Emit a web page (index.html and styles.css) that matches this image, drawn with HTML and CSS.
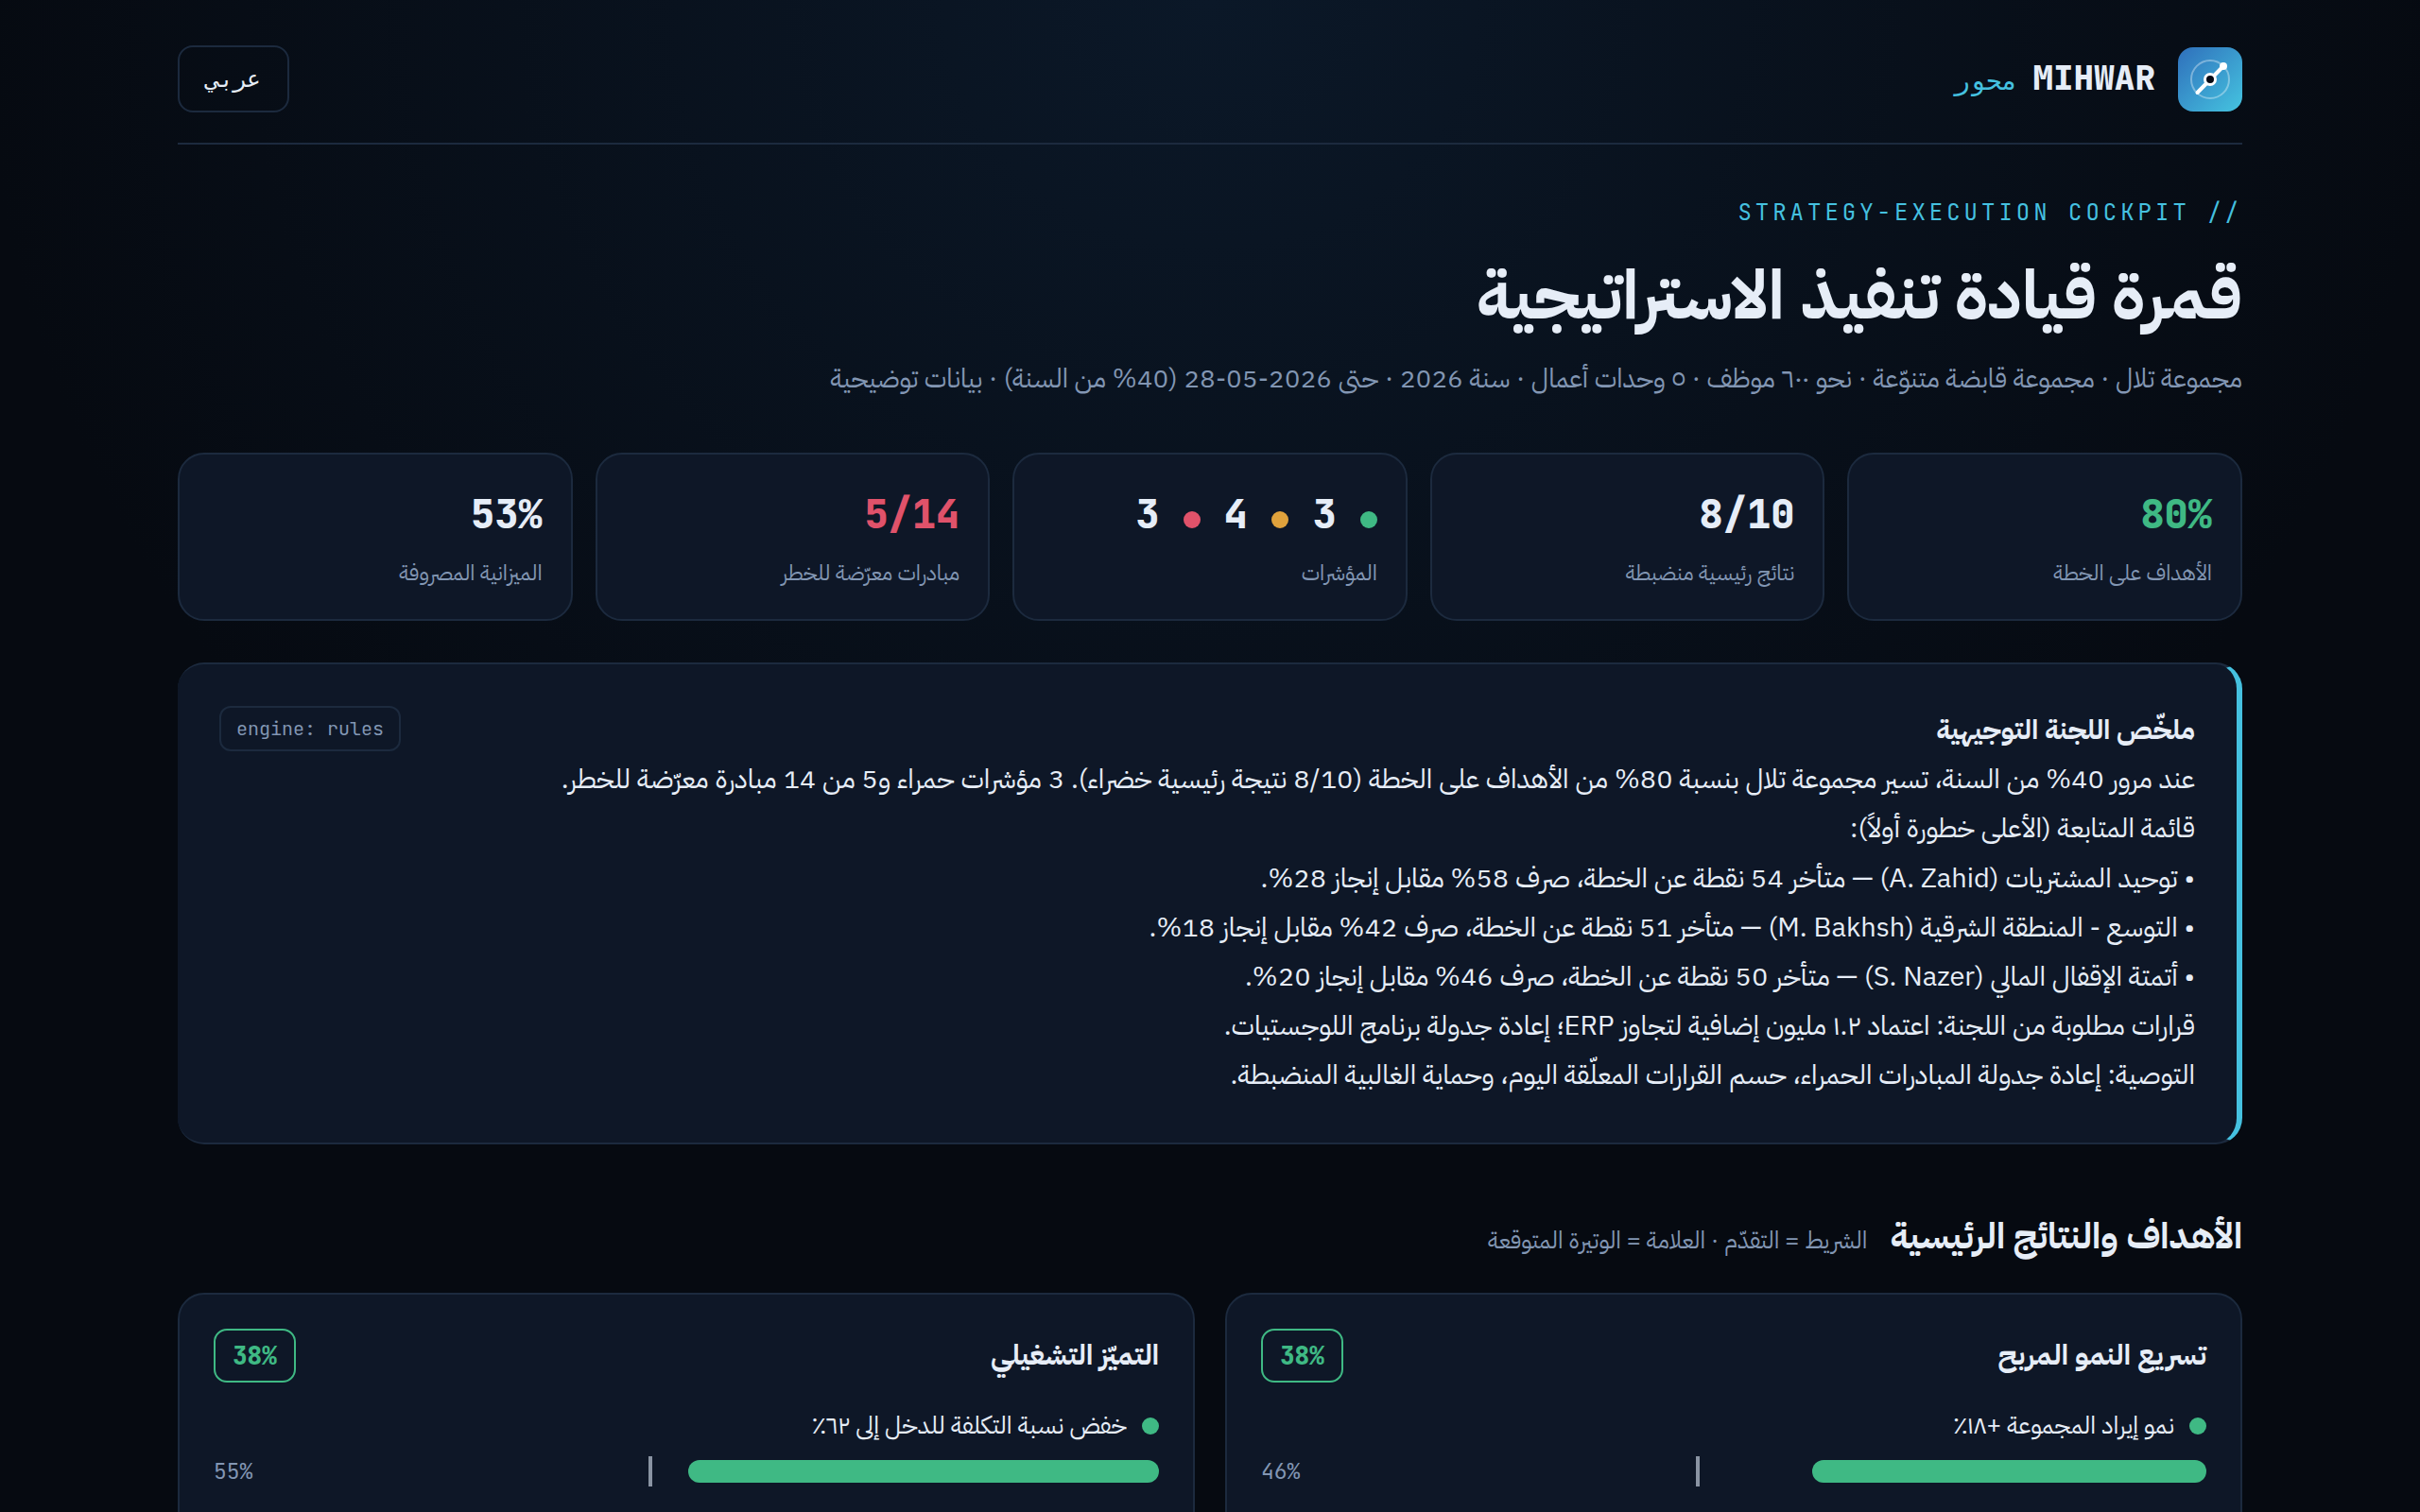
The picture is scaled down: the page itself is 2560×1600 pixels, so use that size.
FILE: index.html
```html
<!DOCTYPE html>
<html lang="ar" dir="rtl">
<head>
<meta charset="UTF-8" />
<meta name="viewport" content="width=device-width, initial-scale=1" />
<title>MIHWAR محور</title>
<link rel="stylesheet" href="styles.css">
</head>
<body>
<div class="wrap">

  <header class="topbar">
    <div class="brand">
      <svg class="logo" viewBox="0 0 68 68" aria-hidden="true">
        <defs>
          <linearGradient id="logoFill" x1="0" y1="0" x2="1" y2="1">
            <stop offset="0" stop-color="#2f6fbb" />
            <stop offset="1" stop-color="#45c4e0" />
          </linearGradient>
        </defs>
        <rect width="68" height="68" rx="16" fill="url(#logoFill)" />
        <circle cx="34" cy="34" r="20" fill="none" stroke="#fff" stroke-opacity=".35" stroke-width="2" />
        <path d="M20.500 48L48 20" stroke="#fff" stroke-width="4" stroke-linecap="round" />
        <circle cx="48" cy="20" r="4" fill="#fff" />
        <circle cx="34" cy="34" r="5.500" fill="#060a14" stroke="#fff" stroke-width="3" />
      </svg>
      <div class="name">MIHWAR <span class="name-ar">محور</span></div>
    </div>
    <button type="button" class="lang">عربي</button>
  </header>

  <main>
    <section class="hero">
      <p class="eyebrow">// STRATEGY-EXECUTION COCKPIT</p>
      <h1>قمرة قيادة تنفيذ الاستراتيجية</h1>
      <p class="sub">مجموعة تلال · مجموعة قابضة متنوّعة · نحو ٦٠٠ موظف · ٥ وحدات أعمال · سنة 2026 · حتى <bdi>28-05-2026</bdi> (40% من السنة) · بيانات توضيحية</p>
    </section>

    <section class="stats">
      <div class="stat">
        <div class="num green" dir="ltr">80%</div>
        <div class="label">الأهداف على الخطة</div>
      </div>
      <div class="stat">
        <div class="num" dir="ltr">8/10</div>
        <div class="label">نتائج رئيسية منضبطة</div>
      </div>
      <div class="stat">
        <div class="num"><i class="dot green"></i> 3 <i class="dot amber"></i> 4 <i class="dot red"></i> 3</div>
        <div class="label">المؤشرات</div>
      </div>
      <div class="stat">
        <div class="num red" dir="ltr">5/14</div>
        <div class="label">مبادرات معرّضة للخطر</div>
      </div>
      <div class="stat">
        <div class="num" dir="ltr">53%</div>
        <div class="label">الميزانية المصروفة</div>
      </div>
    </section>

    <section class="brief">
      <div class="brief-head">
        <h2>ملخّص اللجنة التوجيهية</h2>
        <span class="engine" dir="ltr">engine: rules</span>
      </div>
      <p>عند مرور 40% من السنة، تسير مجموعة تلال بنسبة 80% من الأهداف على الخطة (8/10 نتيجة رئيسية خضراء). 3 مؤشرات حمراء و5 من 14 مبادرة معرّضة للخطر.</p>
      <p>قائمة المتابعة (الأعلى خطورة أولاً):</p>
      <p>• توحيد المشتريات (A. Zahid) — متأخر 54 نقطة عن الخطة، صرف 58% مقابل إنجاز 28%.</p>
      <p>• التوسع - المنطقة الشرقية (M. Bakhsh) — متأخر 51 نقطة عن الخطة، صرف 42% مقابل إنجاز 18%.</p>
      <p>• أتمتة الإقفال المالي (S. Nazer) — متأخر 50 نقطة عن الخطة، صرف 46% مقابل إنجاز 20%.</p>
      <p>قرارات مطلوبة من اللجنة: اعتماد ١.٢ مليون إضافية لتجاوز ERP؛ إعادة جدولة برنامج اللوجستيات.</p>
      <p>التوصية: إعادة جدولة المبادرات الحمراء، حسم القرارات المعلّقة اليوم، وحماية الغالبية المنضبطة.</p>
    </section>

    <section class="okrs">
      <div class="section-head">
        <h2>الأهداف والنتائج الرئيسية</h2>
        <span>الشريط = التقدّم · العلامة = الوتيرة المتوقعة</span>
      </div>
      <div class="okr-grid">
        <article class="okr">
          <div class="okr-head">
            <h3>تسريع النمو المربح</h3>
            <span class="score" dir="ltr">38%</span>
          </div>
          <div class="kr">
            <div class="kr-name"><i class="dot green"></i>نمو إيراد المجموعة +١٨٪</div>
            <div class="kr-row">
              <div class="bar"><div class="fill" style="width:46%"></div><div class="pace" style="left:40.4%"></div></div>
              <span class="pct" dir="ltr">46%</span>
            </div>
          </div>
        </article>
        <article class="okr">
          <div class="okr-head">
            <h3>التميّز التشغيلي</h3>
            <span class="score" dir="ltr">38%</span>
          </div>
          <div class="kr">
            <div class="kr-name"><i class="dot green"></i>خفض نسبة التكلفة للدخل إلى ٦٢٪</div>
            <div class="kr-row">
              <div class="bar"><div class="fill" style="width:55%"></div><div class="pace" style="left:40.4%"></div></div>
              <span class="pct" dir="ltr">55%</span>
            </div>
          </div>
          <div class="kr">
            <div class="kr-name"><i class="dot green"></i>أتمتة الإقفال المالي</div>
            <div class="kr-row">
              <div class="bar"><div class="fill" style="width:20%"></div><div class="pace" style="left:40.4%"></div></div>
              <span class="pct" dir="ltr">20%</span>
            </div>
          </div>
        </article>
      </div>
    </section>
  </main>

</div>
</body>
</html>
```

FILE: styles.css
```css
:root {
  --bg: #060a11;
  --card: #0e1727;
  --line: #1c2a3e;
  --text: #e6edf7;
  --muted: #8296b3;
  --cyan: #45c1e0;
  --green: #3fb984;
  --amber: #e0a23c;
  --red: #e0526a;
  --sans: "IBM Plex Sans Arabic", "IBM Plex Sans", "DejaVu Sans", sans-serif;
  --mono: "JetBrains Mono", "DejaVu Sans Mono", monospace;
}

* {
  box-sizing: border-box;
  margin: 0;
  padding: 0;
}

html {
  background: var(--bg);
}

body {
  min-height: 100vh;
  overflow-x: hidden;
  background: radial-gradient(1300px 1200px at 50% 0, #0b1828, var(--bg)) no-repeat;
  color: var(--text);
  font-family: var(--sans);
  font-size: 29px;
  line-height: 52px;
}

.wrap {
  max-width: 2360px;
  margin: 0 auto;
  padding: 0 88px;
}

.topbar {
  display: flex;
  justify-content: space-between;
  align-items: center;
  padding: 48px 0 32px;
  border-bottom: 2px solid var(--line);
}

.brand {
  display: flex;
  align-items: center;
  gap: 24px;
}

.logo {
  width: 68px;
  height: 68px;
}

.name {
  display: flex;
  align-items: baseline;
  gap: 16px;
  font-family: var(--mono);
  font-size: 36px;
  font-weight: 800;
}

.name-ar {
  color: var(--cyan);
  font-size: 28px;
  font-weight: 400;
}

.lang {
  padding: 12px 28px;
  background: transparent;
  border: 2px solid var(--line);
  border-radius: 16px;
  color: var(--text);
  font-family: var(--mono);
  font-size: 24px;
  line-height: 43px;
  cursor: pointer;
}

.hero {
  padding: 52px 0;
}

.eyebrow {
  color: var(--cyan);
  font-family: var(--mono);
  font-size: 24px;
  line-height: 40px;
  letter-spacing: 4px;
}

h1 {
  margin: 20px 0 14px;
  font-size: 72px;
  line-height: 96px;
}

.sub {
  color: var(--muted);
  font-size: 28px;
}

.stats {
  display: grid;
  grid-template-columns: repeat(5, 1fr);
  gap: 24px;
}

.stat {
  padding: 28px 30px;
  background: var(--card);
  border: 2px solid var(--line);
  border-radius: 28px;
}

.num {
  font-family: var(--mono);
  font-size: 42px;
  font-weight: 800;
  line-height: 70px;
  text-align: right;
}

.num.green {
  color: var(--green);
}

.num.red {
  color: var(--red);
}

.label {
  margin-top: 8px;
  color: var(--muted);
  font-size: 23px;
  line-height: 40px;
}

.dot {
  display: inline-block;
  width: 18px;
  height: 18px;
  border-radius: 50%;
}

.dot.green {
  background: var(--green);
}

.dot.amber {
  background: var(--amber);
}

.dot.red {
  background: var(--red);
}

.brief {
  margin-top: 44px;
  padding: 44px;
  background: var(--card);
  border: 2px solid var(--line);
  border-left: none;
  border-right: 6px solid var(--cyan);
  border-radius: 28px;
  line-height: 1.8;
}

.brief-head {
  display: flex;
  justify-content: space-between;
}

.brief h2 {
  font-size: 29px;
}

.engine {
  align-self: flex-start;
  padding: 6px 16px;
  border: 2px solid var(--line);
  border-radius: 12px;
  color: var(--muted);
  font-family: var(--mono);
  font-size: 20px;
  line-height: 32px;
}

.section-head {
  display: flex;
  align-items: baseline;
  gap: 24px;
  margin: 66px 0 27px;
}

.section-head h2 {
  font-size: 38px;
  line-height: 64px;
}

.section-head span {
  color: var(--muted);
  font-size: 25px;
}

.okr-grid {
  display: grid;
  grid-template-columns: 1fr 1fr;
  gap: 32px;
}

.okr {
  padding: 36px;
  background: var(--card);
  border: 2px solid var(--line);
  border-radius: 28px;
}

.okr-head {
  display: flex;
  justify-content: space-between;
  align-items: center;
  padding-bottom: 10px;
}

.okr h3 {
  font-size: 30px;
}

.score {
  padding: 6px 18px;
  border: 2px solid var(--green);
  border-radius: 14px;
  color: var(--green);
  font-family: var(--mono);
  font-size: 26px;
  font-weight: 800;
  line-height: 41px;
}

.kr {
  margin-top: 14px;
}

.kr-name {
  display: flex;
  align-items: center;
  gap: 16px;
  font-size: 26px;
  line-height: 44px;
}

.kr-row {
  display: flex;
  align-items: center;
  gap: 20px;
}

.bar {
  position: relative;
  flex: 1;
  height: 24px;
}

.fill {
  height: 100%;
  background: var(--green);
  border-radius: 12px;
}

/* expected pace tick, sits over the bar */
.pace {
  position: absolute;
  top: -4px;
  bottom: -4px;
  width: 4px;
  background: #8a94a3;
}

.pct {
  width: 74px;
  color: var(--muted);
  font-family: var(--mono);
  font-size: 23px;
}
```
